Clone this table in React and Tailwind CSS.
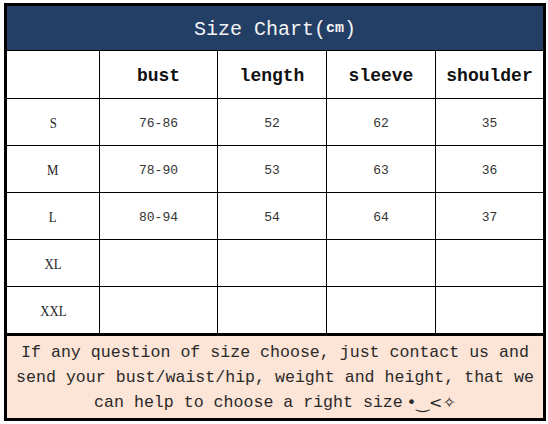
const rows = [
  { size: "S", bust: "76-86", length: "52", sleeve: "62", shoulder: "35" },
  { size: "M", bust: "78-90", length: "53", sleeve: "63", shoulder: "36" },
  { size: "L", bust: "80-94", length: "54", sleeve: "64", shoulder: "37" },
  { size: "XL", bust: "", length: "", sleeve: "", shoulder: "" },
  { size: "XXL", bust: "", length: "", sleeve: "", shoulder: "" },
]

const cols = "grid grid-cols-[93px_118px_109px_109px_107px]"
const mono = "font-['Liberation_Mono','DejaVu_Sans_Mono',monospace]"

const SizeChart = () => {
  return (
    <div className="min-h-screen bg-white pt-[3px] pl-[4px]">
      <div className="w-[542px] border-[3px] border-black">
        {/* Title */}
        <div
          className={`h-[45px] pt-[3px] bg-[#243f66] border-b border-black flex items-center justify-center text-[#f4f4f4] text-[20px] ${mono}`}
        >
          Size Chart(<span className="text-[15px] font-bold">cm</span>)
        </div>

        {/* Header row */}
        <div className={`${cols} h-[48px] border-b border-black`}>
          <div className="border-r border-black" />
          {["bust", "length", "sleeve", "shoulder"].map((h, i) => (
            <div
              key={h}
              className={`flex items-center justify-center pt-[3px] text-[18px] font-bold text-[#111] ${mono} ${
                i < 3 ? "border-r border-black" : ""
              }`}
            >
              {h}
            </div>
          ))}
        </div>

        {/* Data rows */}
        {rows.map((r, idx) => (
          <div
            key={r.size}
            className={`${cols} ${idx < rows.length - 1 ? "h-[47px] border-b border-black" : "h-[46px]"}`}
          >
            <div className="border-r border-black flex items-center justify-center pt-[3px]">
              <span className="text-[15px] text-[#222] font-['Liberation_Serif',serif] scale-x-[0.85]">
                {r.size}
              </span>
            </div>
            {[r.bust, r.length, r.sleeve, r.shoulder].map((v, i) => (
              <div
                key={i}
                className={`flex items-center justify-center pt-[3px] text-[13px] text-[#333] ${mono} ${
                  i < 3 ? "border-r border-black" : ""
                }`}
              >
                {v}
              </div>
            ))}
          </div>
        ))}

        {/* Notes */}
        <div
          className={`h-[85px] border-t-[3px] border-black bg-[#fce4d6] flex flex-col items-center justify-center text-[16.6px] leading-[25px] text-[#2a2a2a] ${mono}`}
        >
          <div>If any question of size choose, just contact us and</div>
          <div>send your bust/waist/hip, weight and height, that we</div>
          <div className="flex items-center">
            can help to choose a right size
            <span className="ml-[4px] font-['DejaVu_Sans',sans-serif] text-[16px]">•‿&lt;✧</span>
          </div>
        </div>
      </div>
    </div>
  )
}

export default SizeChart
